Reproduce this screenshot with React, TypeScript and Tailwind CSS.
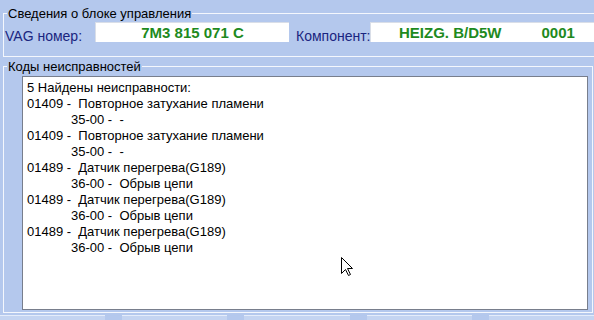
import React from "react";

const faults: { code: string; text: string; sub: string }[] = [
  { code: "01409", text: "Повторное затухание пламени", sub: "35-00 -  -" },
  { code: "01409", text: "Повторное затухание пламени", sub: "35-00 -  -" },
  { code: "01489", text: "Датчик перегрева(G189)", sub: "36-00 -  Обрыв цепи" },
  { code: "01489", text: "Датчик перегрева(G189)", sub: "36-00 -  Обрыв цепи" },
  { code: "01489", text: "Датчик перегрева(G189)", sub: "36-00 -  Обрыв цепи" },
];

export default function App() {
  return (
    <div className="relative w-[594px] h-[320px] overflow-hidden bg-[#b4c8ed] font-['Liberation_Sans',Arial,sans-serif] text-black">
      <fieldset className="ml-[3px] mt-[6px] w-[640px] border border-[#f4f7fd] pb-[12px]">
        <legend className="ml-[3px] px-[1px] text-[13px] leading-[15px]">
          Сведения о блоке управления
        </legend>
        <div className="flex items-start pt-[1px] pl-[1px]">
          <div className="w-[90px] mt-[7px] text-[14px] leading-[15px] text-[#1a2580]">
            VAG номер:
          </div>
          <div className="w-[194px] h-[20px] bg-white border-t border-l border-[#d9dee8] flex items-center justify-center text-[15px] leading-[18px] font-bold text-[#1e8a1e]">
            7M3 815 071 C
          </div>
          <div className="ml-[7px] w-[74px] mt-[7px] text-[14px] leading-[15px] text-[#1a2580]">
            Компонент:
          </div>
          <div className="w-[300px] h-[20px] bg-white border-t border-l border-[#d9dee8] flex items-center pl-[28px] text-[15px] leading-[18px] font-bold text-[#1e8a1e] whitespace-pre">
            <span>HEIZG. B/D5W</span>
            <span className="ml-[40px]">0001</span>
          </div>
        </div>
      </fieldset>

      <fieldset className="ml-[3px] mt-[2px] w-[590px] border border-[#f4f7fd] pb-[2px]">
        <legend className="ml-[3px] px-[1px] text-[13px] leading-[15px]">
          Коды неисправностей
        </legend>
        <div className="mt-[2px] ml-[18px] mr-[4px] h-[234px] border border-[#787e8c] bg-white pl-[4px] pt-[3px] text-[13px] leading-[16px] whitespace-pre">
          <div>5 Найдены неисправности:</div>
          {faults.map((f, i) => (
            <React.Fragment key={i}>
              <div>{`${f.code} -  ${f.text}`}</div>
              <div className="pl-[44px]">{f.sub}</div>
            </React.Fragment>
          ))}
        </div>
      </fieldset>

      <div className="mt-[2px] flex gap-[17px]">
        <div className="w-[107px] h-[10px] bg-[#c4d4f1] border-t border-[#e4ecfa]" />
        <div className="w-[107px] h-[10px] bg-[#c4d4f1] border-t border-[#e4ecfa]" />
        <div className="w-[107px] h-[10px] bg-[#c4d4f1] border-t border-[#e4ecfa]" />
        <div className="w-[107px] h-[10px] bg-[#c4d4f1] border-t border-[#e4ecfa]" />
        <div className="w-[107px] h-[10px] bg-[#c4d4f1] border-t border-[#e4ecfa]" />
      </div>

      <svg
        className="absolute left-[341px] top-[257px]"
        width="13"
        height="20"
        viewBox="0 0 13 20"
      >
        <path
          d="M0.5 0.5 L0.5 16.5 L4.5 12.5 L7.5 18.5 L9.5 17.5 L6.5 11.5 L11.5 11.5 Z"
          fill="white"
          stroke="black"
          strokeWidth="1"
          strokeLinejoin="miter"
        />
      </svg>
    </div>
  );
}
